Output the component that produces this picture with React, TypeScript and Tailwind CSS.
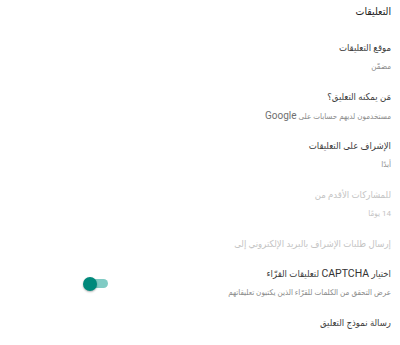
const Row = ({ label, value, disabled }: { label: React.ReactNode; value?: React.ReactNode; disabled?: boolean }) => (
  <div className="flex flex-col">
    <span className={`h-[18px] leading-[18px] text-[9.5px] ${disabled ? 'text-[#c4c4c4]' : 'text-[#3c3c3c]'}`}>{label}</span>
    {value && (
      <span className={`h-[18px] leading-[18px] mt-[1px] text-[8px] ${disabled ? 'text-[#c4c4c4]' : 'text-[#8a8a8a]'}`}>
        {value}
      </span>
    )}
  </div>
);

export default function App() {
  return (
    <div
      dir="rtl"
      className="w-[400px] h-[345px] bg-white pr-[9px] pl-4 pt-[2px] flex flex-col"
      style={{ fontFamily: 'Roboto, "DejaVu Sans Condensed", "DejaVu Sans", sans-serif' }}
    >
      <h1 className="h-[20px] leading-[20px] text-[10.5px] text-[#212121] mb-[17px]">التعليقات</h1>
      <div className="flex flex-col gap-[12px]">
        <Row label="موقع التعليقات" value="مضمّن" />
        <Row
          label="مَن يمكنه التعليق؟"
          value={
            <>
              مستخدمون لديهم حسابات على <span className="text-[10px] text-[#6f6f6f]">Google</span>
            </>
          }
        />
        <Row label="الإشراف على التعليقات" value="أبدًا" />
        <Row label="للمشاركات الأقدم من" value="14 يومًا" disabled />
        <Row label="إرسال طلبات الإشراف بالبريد الإلكتروني إلى" disabled />
        <div className="flex items-center">
          <div className="flex-1 min-w-0">
            <Row
              label={
                <>
                  اختيار <span className="text-[10.5px] text-[#333]">CAPTCHA</span> لتعليقات القرّاء
                </>
              }
              value="عرض التحقق من الكلمات للقرّاء الذين يكتبون تعليقاتهم"
            />
          </div>
          <div className="relative w-[25px] h-[14px] ml-[67px] flex items-center">
            <div className="absolute left-[7px] right-0 h-[9px] rounded-full bg-[#80cbc4]" />
            <div className="absolute left-0 w-[14px] h-[14px] rounded-full bg-[#00897b] shadow-[0_1px_2px_rgba(0,0,0,0.3)]" />
          </div>
        </div>
        <Row label="رسالة نموذج التعليق" />
      </div>
    </div>
  );
}
